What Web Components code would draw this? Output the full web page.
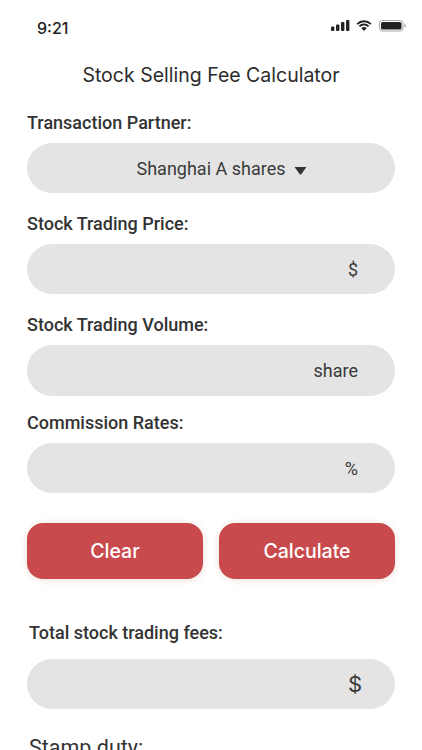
<!DOCTYPE html>
<html><head><meta charset="utf-8">
<style>
html,body{margin:0;padding:0;background:#fff;height:750px;overflow:hidden}
body{font-family:Roboto,"Liberation Sans",sans-serif;color:#333}
</style></head><body>
<calc-app>
<status-bar></status-bar>
<title-bar>Stock Selling Fee Calculator</title-bar>
<form-field label="Transaction Partner:" top="25" gap="10"><pill-box center><span>Shanghai A shares</span><drop-arrow></drop-arrow></pill-box></form-field>
<form-field label="Stock Trading Price:" top="21" gap="10"><pill-box unit-size="18">$</pill-box></form-field>
<form-field label="Stock Trading Volume:" top="21" gap="10"><pill-box unit-size="18" style="height:51px">share</pill-box></form-field>
<form-field label="Commission Rates:" top="17" gap="10"><pill-box unit-size="18">%</pill-box></form-field>
<button-row><red-button>Clear</red-button><red-button>Calculate</red-button></button-row>
<form-field label="Total stock trading fees:" top="44" gap="16" indent="2"><pill-box unit-size="22" unit-font="Inter" style="padding-right:33px">$</pill-box></form-field>
<form-field label="Stamp duty:" top="29" gap="14" indent="2" light></form-field>
</calc-app>
<script>
function def(name,html,init){
  customElements.define(name,class extends HTMLElement{
    constructor(){super();this.attachShadow({mode:'open'}).innerHTML=html;}
    connectedCallback(){if(init)init(this,this.shadowRoot);}
  });
}
def('calc-app',`<style>:host{display:flex;flex-direction:column;width:422px;height:750px;overflow:hidden;padding:0 27px;box-sizing:border-box}</style><slot></slot>`);
def('status-bar',`<style>
:host{display:flex;align-items:center;justify-content:space-between;height:28px;margin:18px -12px 0 10px;font:500 16px Inter,"Liberation Sans",sans-serif;color:#222}
svg{display:block;margin-top:-4px}
</style><span>9:21</span>
<svg width="76" height="14" viewBox="0 0 76 14" fill="#222">
<rect x="0" y="7.500" width="3.400" height="4.500" rx="1"/><rect x="5" y="5.500" width="3.400" height="6.500" rx="1"/><rect x="10" y="3" width="3.400" height="9" rx="1"/><rect x="15" y="1" width="3.400" height="11" rx="1"/>
<path d="M33 3.200c2.400 0 4.600 1 6.200 2.500l1.300-1.300A10.800 10.800 0 0 0 33 1.200a10.800 10.800 0 0 0-7.500 3.200l1.300 1.300A9 9 0 0 1 33 3.200z"/>
<path d="M33 6.400c1.500 0 2.900.6 4 1.600l1.200-1.300A7.600 7.600 0 0 0 33 4.600c-2 0-3.800.8-5.200 2.100L29 8c1.100-1 2.500-1.600 4-1.600z"/>
<path d="M33 12l2.800-2.900A4.100 4.100 0 0 0 33 8a4.100 4.100 0 0 0-2.800 1.100z"/>
<rect x="48.500" y="1.500" width="23.500" height="10.500" rx="3" fill="none" stroke="#222" stroke-opacity=".4"/>
<rect x="50" y="3" width="20.500" height="7.500" rx="1.600"/>
<path d="M73.500 5v3.500c.8-.3 1.300-1 1.300-1.750S74.300 5.300 73.500 5z" fill-opacity=".45"/>
</svg>`);
def('title-bar',`<style>:host{display:block;text-align:center;margin-top:24px;font:400 19.500px/26px Inter,"Liberation Sans",sans-serif;color:#2c2c2c}</style><slot></slot>`);
def('form-field',`<style>
:host{display:block}
.l{font:500 18px/20px Roboto,sans-serif;color:#333}
</style><div class="l"></div><slot></slot>`,(el,r)=>{
  const l=r.querySelector('.l');
  l.textContent=el.getAttribute('label');
  l.style.marginBottom=(el.getAttribute('gap')||8)+'px';
  if(el.hasAttribute('indent'))l.style.marginLeft=el.getAttribute('indent')+'px';
  if(el.hasAttribute('light')){l.style.fontWeight='400';l.style.fontSize='21.500px';}
  el.style.marginTop=(el.getAttribute('top')||0)+'px';
});
def('pill-box',`<style>
:host{display:flex;align-items:center;height:50px;border-radius:25px;background:#e4e4e4;color:#3a3a3a;justify-content:flex-end;padding:0 37px;font:400 18px Roboto,sans-serif;box-sizing:border-box}
:host([center]){justify-content:center;gap:9px;padding:0 0 0 22px}
</style><slot></slot>`,(el)=>{
  if(el.hasAttribute('unit-size'))el.style.fontSize=el.getAttribute('unit-size')+'px';
  if(el.hasAttribute('unit-font'))el.style.fontFamily=el.getAttribute('unit-font');
});
def('drop-arrow',`<style>:host{display:block;line-height:0;margin-top:5px}</style><svg width="13" height="8" viewBox="0 0 13 8"><path d="M.5 0h12L7.200 7.200a1 1 0 0 1-1.400 0z" fill="#333"/></svg>`);
def('button-row',`<style>:host{display:flex;gap:16px;margin-top:30px}</style><slot></slot>`);
def('red-button',`<style>:host{flex:1;display:flex;align-items:center;justify-content:center;height:56px;border-radius:16px;background:#c94a4d;color:#fff;font:500 19.500px Inter,"Liberation Sans",sans-serif;box-shadow:0 1px 7px rgba(201,74,77,.2)}</style><slot></slot>`);
</script>
</body></html>
